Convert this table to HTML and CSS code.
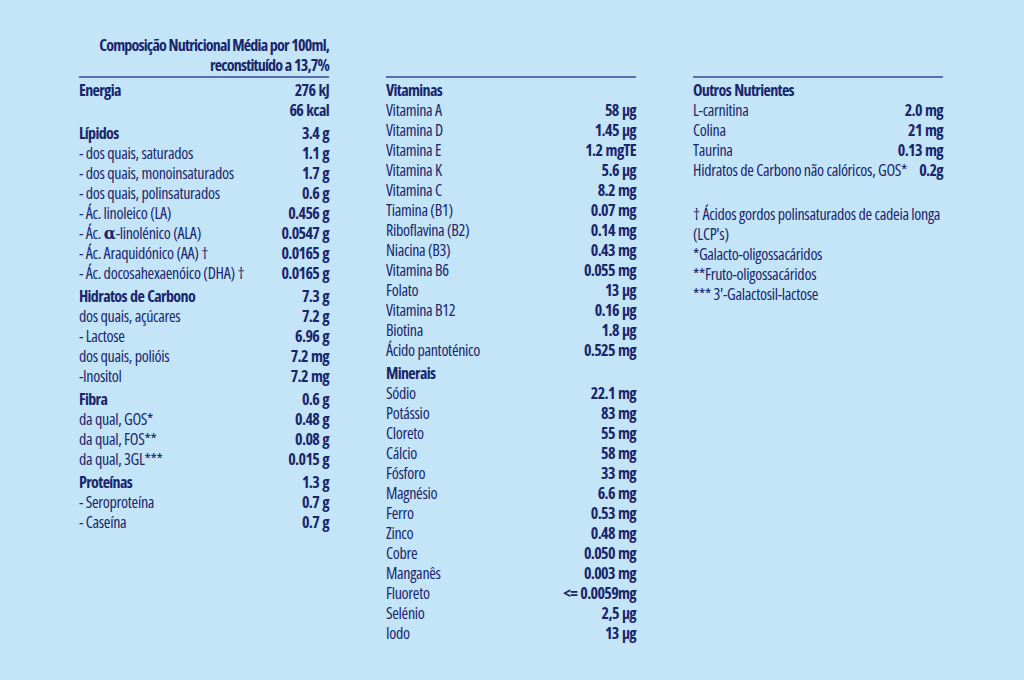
FILE: index.html
```html
<!DOCTYPE html>
<html lang="pt">
<head>
<meta charset="utf-8">
<title>Composição Nutricional</title>
<link rel="stylesheet" href="styles.css">
</head>
<body>
<div class="sheet">
  <div class="title">Composição Nutricional Média por 100ml,<br>reconstituído a 13,7%</div>

  <div class="col">
    <div class="group first">
      <div class="row head"><span>Energia</span><span class="v">276 kJ</span></div>
      <div class="row"><span></span><span class="v">66 kcal</span></div>
    </div>
    <div class="group">
      <div class="row head"><span>Lípidos</span><span class="v">3.4 g</span></div>
      <div class="row"><span>- dos quais, saturados</span><span class="v">1.1 g</span></div>
      <div class="row"><span>- dos quais, monoinsaturados</span><span class="v">1.7 g</span></div>
      <div class="row"><span>- dos quais, polinsaturados</span><span class="v">0.6 g</span></div>
      <div class="row"><span>- Ác. linoleico (LA)</span><span class="v">0.456 g</span></div>
      <div class="row"><span>- Ác. <span class="alpha">α</span>-linolénico (ALA)</span><span class="v">0.0547 g</span></div>
      <div class="row"><span>- Ác. Araquidónico (AA) †</span><span class="v">0.0165 g</span></div>
      <div class="row"><span>- Ác. docosahexaenóico (DHA) †</span><span class="v">0.0165 g</span></div>
    </div>
    <div class="group">
      <div class="row head"><span>Hidratos de Carbono</span><span class="v">7.3 g</span></div>
      <div class="row"><span>dos quais, açúcares</span><span class="v">7.2 g</span></div>
      <div class="row"><span>- Lactose</span><span class="v">6.96 g</span></div>
      <div class="row"><span>dos quais, polióis</span><span class="v">7.2 mg</span></div>
      <div class="row"><span>-Inositol</span><span class="v">7.2 mg</span></div>
    </div>
    <div class="group">
      <div class="row head"><span>Fibra</span><span class="v">0.6 g</span></div>
      <div class="row"><span>da qual, GOS*</span><span class="v">0.48 g</span></div>
      <div class="row"><span>da qual, FOS**</span><span class="v">0.08 g</span></div>
      <div class="row"><span>da qual, 3GL***</span><span class="v">0.015 g</span></div>
    </div>
    <div class="group">
      <div class="row head"><span>Proteínas</span><span class="v">1.3 g</span></div>
      <div class="row"><span>- Seroproteína</span><span class="v">0.7 g</span></div>
      <div class="row"><span>- Caseína</span><span class="v">0.7 g</span></div>
    </div>
  </div>

  <div class="col">
    <div class="group first">
      <div class="row head"><span>Vitaminas</span><span class="v"></span></div>
      <div class="row"><span>Vitamina A</span><span class="v">58 µg</span></div>
      <div class="row"><span>Vitamina D</span><span class="v">1.45 µg</span></div>
      <div class="row"><span>Vitamina E</span><span class="v">1.2 mgTE</span></div>
      <div class="row"><span>Vitamina K</span><span class="v">5.6 µg</span></div>
      <div class="row"><span>Vitamina C</span><span class="v">8.2 mg</span></div>
      <div class="row"><span>Tiamina (B1)</span><span class="v">0.07 mg</span></div>
      <div class="row"><span>Riboflavina (B2)</span><span class="v">0.14 mg</span></div>
      <div class="row"><span>Niacina (B3)</span><span class="v">0.43 mg</span></div>
      <div class="row"><span>Vitamina B6</span><span class="v">0.055 mg</span></div>
      <div class="row"><span>Folato</span><span class="v">13 µg</span></div>
      <div class="row"><span>Vitamina B12</span><span class="v">0.16 µg</span></div>
      <div class="row"><span>Biotina</span><span class="v">1.8 µg</span></div>
      <div class="row"><span>Ácido pantoténico</span><span class="v">0.525 mg</span></div>
    </div>
    <div class="group">
      <div class="row head"><span>Minerais</span><span class="v"></span></div>
      <div class="row"><span>Sódio</span><span class="v">22.1 mg</span></div>
      <div class="row"><span>Potássio</span><span class="v">83 mg</span></div>
      <div class="row"><span>Cloreto</span><span class="v">55 mg</span></div>
      <div class="row"><span>Cálcio</span><span class="v">58 mg</span></div>
      <div class="row"><span>Fósforo</span><span class="v">33 mg</span></div>
      <div class="row"><span>Magnésio</span><span class="v">6.6 mg</span></div>
      <div class="row"><span>Ferro</span><span class="v">0.53 mg</span></div>
      <div class="row"><span>Zinco</span><span class="v">0.48 mg</span></div>
      <div class="row"><span>Cobre</span><span class="v">0.050 mg</span></div>
      <div class="row"><span>Manganês</span><span class="v">0.003 mg</span></div>
      <div class="row"><span>Fluoreto</span><span class="v">&lt;= 0.0059mg</span></div>
      <div class="row"><span>Selénio</span><span class="v">2,5 µg</span></div>
      <div class="row"><span>Iodo</span><span class="v">13 µg</span></div>
    </div>
  </div>

  <div class="col">
    <div class="group first">
      <div class="row head"><span>Outros Nutrientes</span><span class="v"></span></div>
      <div class="row"><span>L-carnitina</span><span class="v">2.0 mg</span></div>
      <div class="row"><span>Colina</span><span class="v">21 mg</span></div>
      <div class="row"><span>Taurina</span><span class="v">0.13 mg</span></div>
      <div class="row"><span>Hidratos de Carbono não calóricos, GOS*</span><span class="v">0.2g</span></div>
    </div>
    <div class="notes">
      <p>† Ácidos gordos polinsaturados de cadeia longa (LCP's)</p>
      <p>*Galacto-oligossacáridos</p>
      <p>**Fruto-oligossacáridos</p>
      <p>*** 3'-Galactosil-lactose</p>
    </div>
  </div>
</div>
</body>
</html>
```

FILE: styles.css
```css
html, body {
  margin: 0;
  padding: 0;
  background: #c4e4f8;
}

body {
  width: 1024px;
  height: 680px;
  overflow: hidden;
  color: #18266b;
  font-family: "Open Sans", "Roboto", sans-serif;
  font-stretch: 75%;
  font-size: 16px;
  font-weight: 500;
  line-height: 20px;
  letter-spacing: -0.3px;
}

.sheet {
  display: grid;
  grid-template-columns: 250px 250px 250px;
  grid-template-rows: auto auto;
  column-gap: 57px;
  padding: 35px 0 0 79px;
}

.title {
  grid-column: 1;
  grid-row: 1;
  text-align: right;
  font-weight: 750;
  letter-spacing: -0.8px;
  word-spacing: 0.5px;
}

.col {
  grid-row: 2;
  border-top: 2px solid #5a6fb0;
  margin-top: 1px;
  padding-top: 2px;
}

.row {
  display: flex;
  justify-content: space-between;
  height: 20px;
  white-space: nowrap;
}

.v,
.head {
  font-weight: 750;
}

.v,
.head > span:first-child {
  letter-spacing: -0.65px;
  word-spacing: 1px;
}

.group {
  margin-top: 3px;
}

.group.first {
  margin-top: 0;
}

.alpha {
  font-family: "DejaVu Serif", serif;
  font-stretch: normal;
  font-size: 16px;
  font-weight: bold;
  line-height: 0;
}

.notes {
  margin-top: 24px;
}

.notes p {
  margin: 0;
}
```
